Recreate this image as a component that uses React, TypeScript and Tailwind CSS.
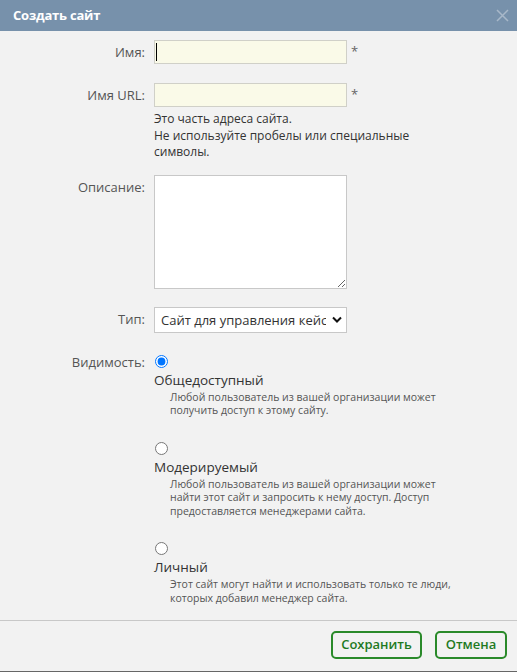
import { useState } from "react";

const options = [
  {
    id: "public",
    title: "Общедоступный",
    text: "Любой пользователь из вашей организации может получить доступ к этому сайту.",
  },
  {
    id: "moderated",
    title: "Модерируемый",
    text: "Любой пользователь из вашей организации может найти этот сайт и запросить к нему доступ. Доступ предоставляется менеджерами сайта.",
  },
  {
    id: "private",
    title: "Личный",
    text: "Этот сайт могут найти и использовать только те люди, которых добавил менеджер сайта.",
  },
];

export default function App() {
  const [visibility, setVisibility] = useState("public");

  return (
    <div
      className="w-[517px] h-[672px] flex flex-col bg-[#f2f2f2] border-b border-[#666] text-[#333]"
      style={{ fontFamily: '"Open Sans", "Noto Sans", sans-serif' }}
    >
      {/* Header */}
      <div className="h-[31px] shrink-0 bg-[#7791ab] flex items-center justify-between pl-[13px] pr-[8px]">
        <span className="text-white text-[13px] font-bold tracking-[-0.2px]">Создать сайт</span>
        <svg width="13" height="13" viewBox="0 0 13 13" className="text-[#a8b8c9]">
          <path d="M1 1 L12 12 M12 1 L1 12" stroke="currentColor" strokeWidth="1.5" />
        </svg>
      </div>

      {/* Body */}
      <div className="flex-1 grid grid-cols-[145px_1fr] content-start gap-x-[9px] pt-[9px] text-[13px] leading-[16px]">
        <div className="text-right pt-[4px] text-[#555]">Имя:</div>
        <div className="flex items-start">
          <div className="w-[193px] h-[24px] bg-[#fafae8] border border-[#d0d0c8] flex items-center pl-[1px]">
            <span className="w-[1px] h-[18px] bg-black" />
          </div>
          <span className="ml-[4px] pt-[3px] text-[#666]">*</span>
        </div>

        <div className="text-right pt-[23px] text-[#555]">Имя URL:</div>
        <div className="pt-[19px]">
          <div className="flex items-start">
            <input className="w-[193px] h-[24px] bg-[#fafae8] border border-[#d0d0c8] outline-none" />
            <span className="ml-[4px] pt-[3px] text-[#666]">*</span>
          </div>
          <p className="mt-[4px] text-[12px] leading-[16.5px] text-[#333] w-[270px]">
            Это часть адреса сайта.
            <br />
            Не используйте пробелы или специальные символы.
          </p>
        </div>

        <div className="text-right pt-[18px] text-[#555]">Описание:</div>
        <div className="pt-[14px]">
          <textarea className="block w-[193px] h-[114px] bg-white border border-[#c8c8c8] outline-none" />
        </div>

        <div className="text-right pt-[22px] text-[#555]">Тип:</div>
        <div className="pt-[18px]">
          <div className="relative w-[193px]">
            <select className="block w-[193px] h-[26px] bg-white border border-[#c8c8c8] appearance-none pl-[6px] pr-[20px] text-[13px] text-[#333] outline-none">
              <option>Сайт для управления кейсами</option>
            </select>
            <svg
              width="10"
              height="8"
              viewBox="0 0 10 8"
              className="absolute right-[5px] top-[9px] pointer-events-none"
            >
              <path d="M1 1.5 L5 5.5 L9 1.5" stroke="#111" strokeWidth="2" fill="none" />
            </svg>
          </div>
        </div>

        <div className="text-right pt-[21px] text-[#555]">Видимость:</div>
        <div className="pt-[22px] flex flex-col gap-[24px]">
          {options.map((o) => (
            <label key={o.id} className="flex flex-col cursor-pointer">
              <input
                type="radio"
                name="visibility"
                checked={visibility === o.id}
                onChange={() => setVisibility(o.id)}
                className="m-0 ml-[1px] w-[13px] h-[13px]"
              />
              <span className="mt-[3px] text-[13.5px] leading-[18px] text-[#333]">{o.title}</span>
              <span className="mt-[2px] pl-[16px] text-[10.5px] leading-[13.5px] text-[#555] w-[306px]">
                {o.text}
              </span>
            </label>
          ))}
        </div>
      </div>

      {/* Footer */}
      <div className="h-[51px] shrink-0 border-t border-[#c8c8c8] flex items-start justify-end gap-[13px] pt-[10px] pr-[10px]">
        <button className="h-[28px] w-[91px] border-2 border-[#2a8a2a] rounded-[5px] text-[#1f7a1f] text-[13px] font-semibold bg-[#f2f2f2]">
          Сохранить
        </button>
        <button className="h-[28px] w-[72px] border-2 border-[#2a8a2a] rounded-[5px] text-[#1f7a1f] text-[13px] font-semibold bg-[#f2f2f2]">
          Отмена
        </button>
      </div>
    </div>
  );
}
